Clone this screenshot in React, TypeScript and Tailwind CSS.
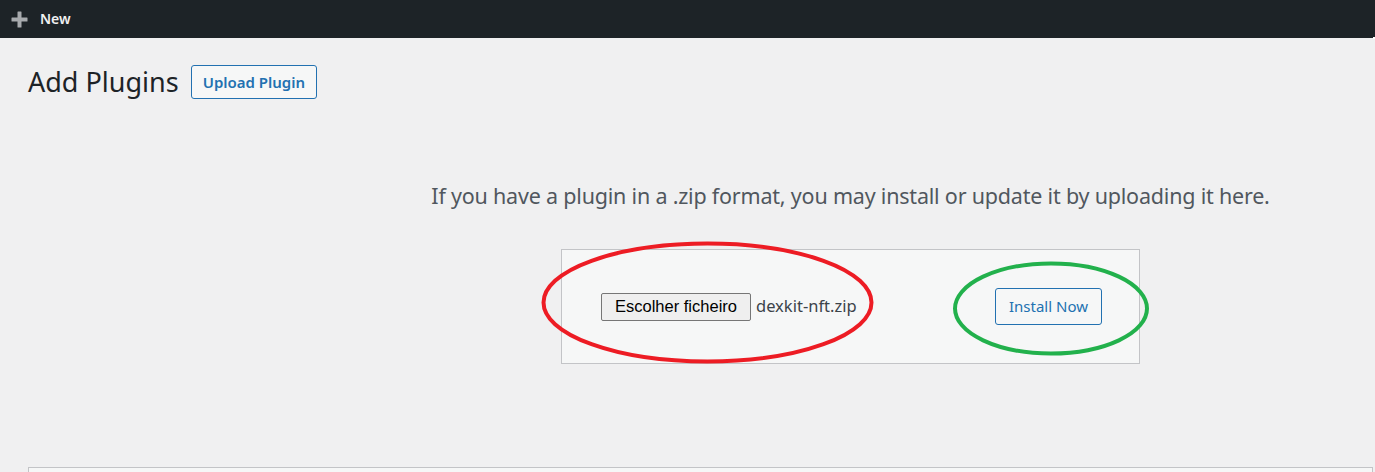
export default function App() {
  return (
    <div
      className="relative w-[1375px] h-[472px] overflow-hidden bg-[#f0f0f1]"
      style={{ fontFamily: '"Noto Sans", "Open Sans", sans-serif' }}
    >
      {/* admin bar */}
      <div className="h-[38px] bg-[#1d2327] flex items-center pl-[11px]">
        <svg width="17" height="17" viewBox="0 0 17 17" className="text-[#a7aaad]">
          <rect x="6.5" y="0.5" width="4" height="16" rx="0.5" fill="currentColor" />
          <rect x="0.5" y="6.5" width="16" height="4" rx="0.5" fill="currentColor" />
        </svg>
        <span className="ml-[12px] text-[14px] font-semibold text-[#f0f0f1] leading-none">New</span>
      </div>

      {/* heading */}
      <div className="flex items-center pl-[28px] pt-[27px]">
        <h1 className="text-[27px] font-normal text-[#1d2327] leading-[34px]">Add Plugins</h1>
        <button className="ml-[12px] h-[34px] px-[11px] rounded-[3px] border border-[#2271b1] bg-[#f6f7f7] text-[#2271b1] text-[15px] font-semibold">
          Upload Plugin
        </button>
      </div>

      {/* upload area */}
      <div className="pl-[328px] pr-[2px]">
        <p className="mt-[83px] text-center text-[21.5px] leading-[28px] text-[#50575e] tracking-[-0.2px]">
          If you have a plugin in a .zip format, you may install or update it by uploading it here.
        </p>
        <div className="relative mx-auto mt-[39px] w-[579px] h-[115px] border border-[#c3c4c7] bg-[#f6f7f7] flex items-center">
          <div className="ml-[39px] flex items-center">
            <span
              className="h-[28px] w-[150px] flex items-center justify-center rounded-[2px] border border-[#767676] bg-[#efefef] text-[16.5px] text-black"
              style={{ fontFamily: '"Liberation Sans", Arial, sans-serif' }}
            >
              Escolher ficheiro
            </span>
            <span className="ml-[5px] text-[16.5px] text-[#3c434a]">dexkit-nft.zip</span>
          </div>
          <button className="ml-auto mr-[37px] h-[37px] w-[107px] rounded-[3px] border border-[#2271b1] bg-[#f6f7f7] text-[#2271b1] text-[15px]">
            Install Now
          </button>
        </div>
      </div>

      {/* annotation ellipses */}
      <svg className="absolute left-0 top-0 pointer-events-none" width="1375" height="472">
        <ellipse cx="707.5" cy="302.5" rx="164" ry="59" fill="none" stroke="#ed1c24" strokeWidth="4" />
        <ellipse cx="1051" cy="308.5" rx="96" ry="45" fill="none" stroke="#22b14c" strokeWidth="4" />
      </svg>

      {/* next section edge */}
      <div className="absolute left-[28px] right-[2px] top-[467px] h-[20px] border border-[#c3c4c7] bg-[#f6f7f7]" />
      <div className="absolute right-0 top-[37px] w-[2px] h-[2px] bg-white" />
    </div>
  );
}
